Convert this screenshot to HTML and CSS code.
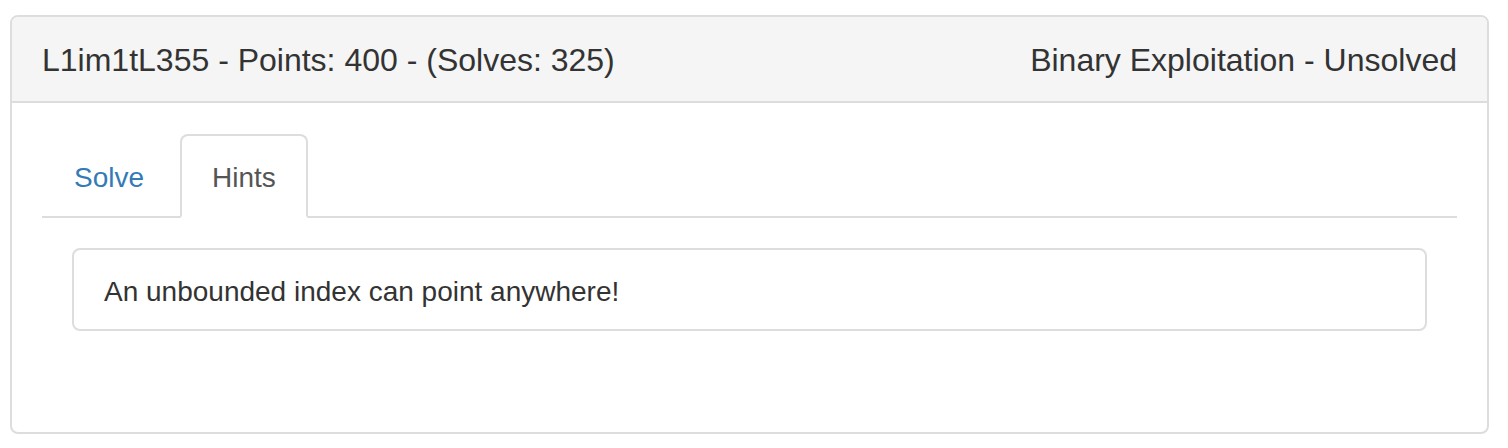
FILE: index.html
```html
<!DOCTYPE html>
<html lang="en">
<head>
<meta charset="utf-8">
<title>Challenge</title>
<link rel="stylesheet" href="styles.css">
</head>
<body>
<div class="panel">
  <div class="panel-heading">
    <span class="title-left">L1im1tL355 - Points: 400 - (Solves: 325)</span>
    <span class="title-right">Binary Exploitation - Unsolved</span>
  </div>
  <div class="panel-body">
    <ul class="nav-tabs">
      <li class="tab"><a class="tab-link" href="#">Solve</a></li>
      <li class="tab active"><a class="tab-link" href="#">Hints</a></li>
    </ul>
    <div class="tab-pane">
      <div class="hint-box">An unbounded index can point anywhere!</div>
    </div>
  </div>
</div>
</body>
</html>
```

FILE: styles.css
```css
* { box-sizing: border-box; }

html, body {
  margin: 0;
  padding: 0;
  background: #ffffff;
}

body {
  font-family: "Liberation Sans", Arial, Helvetica, sans-serif;
  color: #333333;
  padding: 15px 0 0 10px;
}

.panel {
  width: 1479px;
  border: 2px solid #dddddd;
  border-radius: 8px;
  background: #ffffff;
  overflow: hidden;
}

.panel-heading {
  display: flex;
  justify-content: space-between;
  align-items: center;
  background: #f5f5f5;
  border-bottom: 2px solid #dddddd;
  padding: 21px 30px 19px 30px;
  font-size: 32px;
  line-height: 44px;
  color: #333333;
}

.panel-body {
  padding: 31px 30px 30px 30px;
}

.nav-tabs {
  display: flex;
  list-style: none;
  margin: 0;
  padding: 0;
  border-bottom: 2px solid #dddddd;
}

.tab {
  margin-right: 4px;
  margin-bottom: -2px;
}

.tab-link {
  display: block;
  padding: 22px 30px 18px 30px;
  font-size: 28px;
  line-height: 40px;
  color: #337ab7;
  text-decoration: none;
  border: 2px solid transparent;
  border-radius: 8px 8px 0 0;
}

.tab.active .tab-link {
  color: #555555;
  background: #ffffff;
  border-color: #dddddd;
  border-bottom-color: #ffffff;
}

.tab-pane {
  padding: 30px 30px 71px 30px;
}

.hint-box {
  border: 2px solid #dddddd;
  border-radius: 8px;
  padding: 22px 30px 17px 30px;
  font-size: 28px;
  line-height: 40px;
  color: #333333;
}
```
